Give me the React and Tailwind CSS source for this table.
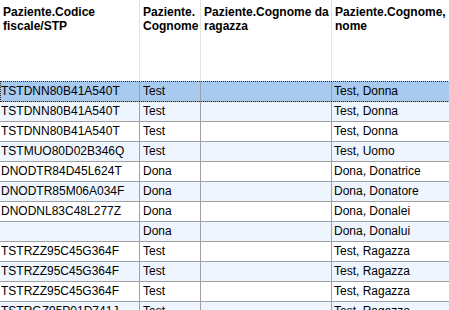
import React from 'react';

const columns = [
  { key: 'cf', lines: ['Paziente.Codice', 'fiscale/STP'], width: 'w-[140px]', head: 'pl-[3px]', body: 'pl-[1px]' },
  { key: 'cognome', lines: ['Paziente.', 'Cognome'], width: 'w-[61px]', head: 'pl-[3px]', body: 'pl-[3px]' },
  { key: 'ragazza', lines: ['Paziente.Cognome da', 'ragazza'], width: 'w-[131px]', head: 'pl-[3px]', body: 'pl-[3px]' },
  { key: 'nome', lines: ['Paziente.Cognome,', 'nome'], width: 'w-[190px]', head: 'pl-[3px]', body: 'pl-[2px]' },
];

const rows = [
  ['TSTDNN80B41A540T', 'Test', '', 'Test, Donna'],
  ['TSTDNN80B41A540T', 'Test', '', 'Test, Donna'],
  ['TSTDNN80B41A540T', 'Test', '', 'Test, Donna'],
  ['TSTMUO80D02B346Q', 'Test', '', 'Test, Uomo'],
  ['DNODTR84D45L624T', 'Dona', '', 'Dona, Donatrice'],
  ['DNODTR85M06A034F', 'Dona', '', 'Dona, Donatore'],
  ['DNODNL83C48L277Z', 'Dona', '', 'Dona, Donalei'],
  ['', 'Dona', '', 'Dona, Donalui'],
  ['TSTRZZ95C45G364F', 'Test', '', 'Test, Ragazza'],
  ['TSTRZZ95C45G364F', 'Test', '', 'Test, Ragazza'],
  ['TSTRZZ95C45G364F', 'Test', '', 'Test, Ragazza'],
  ['TSTRGZ95P01D741J', 'Test', '', 'Test, Ragazzo'],
];

export default function App() {
  return (
    <div
      className="w-[449px] h-[310px] overflow-hidden bg-white text-black text-[12px]"
      style={{ fontFamily: '"Liberation Sans", Arial, sans-serif' }}
    >
      <div className="w-[522px]">
        {/* Header */}
        <div className="flex h-[81px] bg-white font-bold leading-[14px]">
          {columns.map((col) => (
            <div key={col.key} className={`${col.width} shrink-0 border-r border-[#e3e3e3] pt-[5px] ${col.head}`}>
              {col.lines.map((l, i) => (
                <div key={i} className="whitespace-nowrap">{l}</div>
              ))}
            </div>
          ))}
        </div>

        {/* Rows */}
        {rows.map((row, r) => {
          const selected = r === 0;
          const bg = selected ? 'bg-[#a8caef]' : r % 2 === 1 ? 'bg-[#eef5fe]' : 'bg-white';
          return (
            <div
              key={r}
              className={`relative flex border-b border-[#a0a0a0] ${bg} ${selected ? 'h-[21px] leading-[20px]' : 'h-[20px] leading-[19px]'}`}
            >
              {row.map((cell, c) => (
                <div
                  key={c}
                  className={`${columns[c].width} shrink-0 border-r border-[#a0a0a0] whitespace-nowrap overflow-hidden ${columns[c].body}`}
                >
                  {cell}
                </div>
              ))}
              {selected && (
                <div className="absolute inset-x-0 top-0 bottom-[-1px] border border-dotted border-[#3a2612] pointer-events-none" />
              )}
            </div>
          );
        })}
      </div>
    </div>
  );
}
